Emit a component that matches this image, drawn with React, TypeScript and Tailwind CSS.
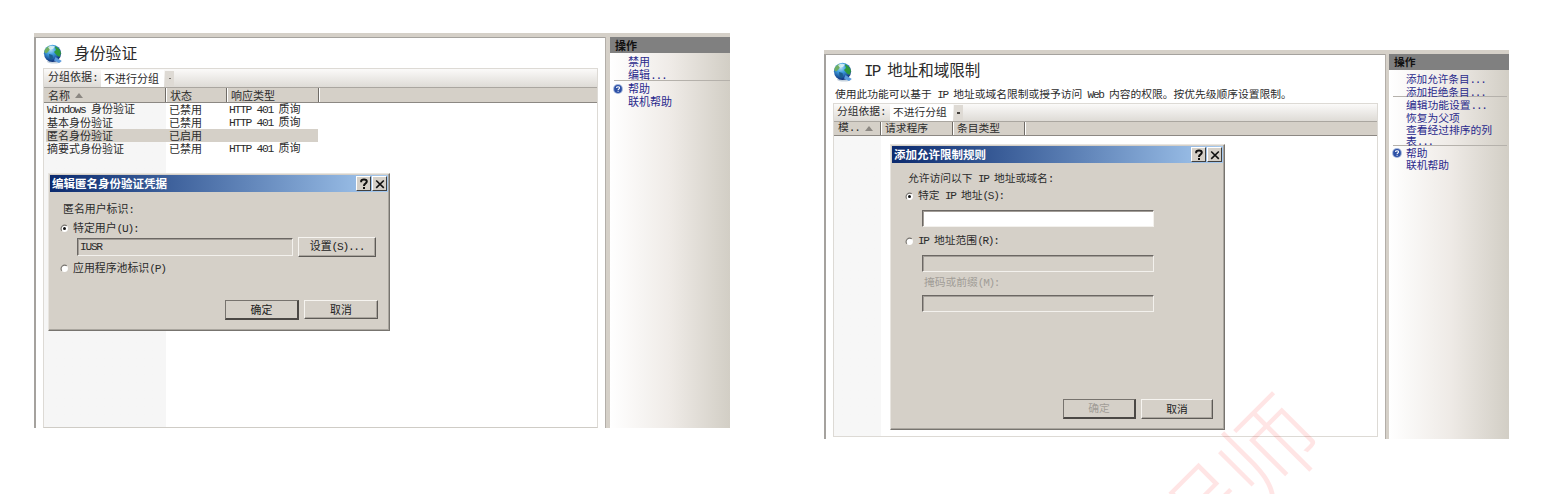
import React from "react";

function T({ children, className = "" }: { children: string; className?: string }) {
  const runs = children.match(/[\x20-\x7e]+|[^\x20-\x7e]+/g) ?? [];
  return (
    <span className={`whitespace-pre ${className}`}>
      {runs.map((r, i) =>
        /^[\x20-\x7e]/.test(r) ? (
          <span key={i} className="font-['Liberation_Mono',monospace] text-[1.03em] tracking-[-0.115em]">{r}</span>
        ) : (
          <span key={i} className="font-['Noto_Sans_CJK_SC',sans-serif]">{r}</span>
        ),
      )}
    </span>
  );
}

function Globe() {
  return (
    <svg viewBox="0 0 20 20" className="h-[20px] w-[20px] shrink-0">
      <defs>
        <radialGradient id="sea" cx="40%" cy="28%" r="72%">
          <stop offset="0" stopColor="#b9e2f5" />
          <stop offset="0.4" stopColor="#3e9fe0" />
          <stop offset="1" stopColor="#0d2f7a" />
        </radialGradient>
      </defs>
      <ellipse cx="11" cy="17.5" rx="7" ry="2" fill="#9fb4c8" opacity=".6" />
      <circle cx="9.5" cy="9.3" r="8.6" fill="url(#sea)" />
      <path d="M1.2 8Q2 4 5.5 2L8 3.5 6.5 6 5 8 3 9.5Z" fill="#6fae62" />
      <path d="M11.5 2Q17 4 18 9L16.5 13 14 11.5 11 8 13 6Z" fill="#2f9a3b" />
      <path d="M6 10L9.5 11 10 13.5 8 16.5 6.5 14Z" fill="#1d5f8d" />
      <path d="M5 3Q9 0.8 12 2.4L10 5 6.5 5.6Z" fill="#e4f5f7" opacity=".8" />
      <path d="M12.5 13L18.8 17 16 19 11 16.5Z" fill="#5b9bdd" />
    </svg>
  );
}

function Help() {
  return (
    <svg viewBox="0 0 10 10" className="h-[10px] w-[10px]">
      <circle cx="5" cy="5" r="4.9" fill="#9fb2da" />
      <circle cx="5" cy="5" r="3.9" fill="#2c50a6" />
      <path d="M3.6 4C3.6 2.3 6.5 2.3 6.5 4 6.5 5 5.1 4.9 5.1 6M5.1 6.8V7.8" fill="none" stroke="#fff" strokeWidth="1.1" />
    </svg>
  );
}

function Caption({ title }: { title: string }) {
  const box = "flex h-[15px] w-[15px] items-center justify-center border border-t-white border-l-white border-r-[#404040] border-b-[#404040] bg-[#d5d0c8]";
  return (
    <div className="flex h-[17px] items-center gap-px bg-linear-to-r from-[#0c2a6e] to-[#a6caf0] pr-px pl-[2px]">
      <T className="flex-1 text-[11.5px] leading-none font-bold text-white">{title}</T>
      <div className={box}>
        <svg viewBox="0 0 12 12" className="h-[12px] w-[12px]">
          <path d="M3.2 4.2V3Q3.2 1.5 6 1.5T8.8 3.6Q8.8 4.8 7.4 5.6 6 6.4 6 8M6 9V11" fill="none" stroke="#111" strokeWidth="2" />
        </svg>
      </div>
      <div className={box}>
        <svg viewBox="0 0 12 12" className="h-[12px] w-[12px]">
          <path d="M2.2 2.5L9.8 9.8M9.8 2.5L2.2 9.8" fill="none" stroke="#111" strokeWidth="1.6" />
        </svg>
      </div>
    </div>
  );
}

function Radio({ on = false }: { on?: boolean }) {
  return (
    <svg viewBox="0 0 9 9" className="h-[9px] w-[9px] shrink-0">
      <circle cx="4.5" cy="4.5" r="3.4" fill="#fff" />
      <path d="M1.8 6.8A3.6 3.6 0 0 1 6.8 1.8" fill="none" stroke="#77736e" strokeWidth="1.1" />
      {on && <circle cx="4.5" cy="4.5" r="1.5" fill="#111" />}
    </svg>
  );
}

function Button({ label, className, strong = false, off = false }: { label: string; className: string; strong?: boolean; off?: boolean }) {
  const edge = strong
    ? "border-r-2 border-b-2 border-t border-l border-t-[#77736e] border-l-[#77736e] border-r-[#4b4845] border-b-[#4b4845]"
    : "border border-t-[#f6f4f0] border-l-[#f6f4f0] border-r-[#5d5a56] border-b-[#5d5a56] shadow-[inset_-1px_-1px_#aaa59e]";
  return (
    <button className={`flex items-center justify-center bg-[#d5d0c8] leading-none ${edge} ${off ? "text-[#a19d97]" : "text-[#222]"} ${className}`}>
      <T>{label}</T>
    </button>
  );
}

function Field({ className, value = "" }: { className: string; value?: string }) {
  return (
    <div className={`flex items-center border border-t-[#6b6763] border-l-[#6b6763] border-r-[#f3f1ed] border-b-[#f3f1ed] shadow-[inset_1px_1px_#a29d97] ${className}`}>
      <T className="leading-none">{value}</T>
    </div>
  );
}

function GroupBar({ className, arrow }: { className: string; arrow: string }) {
  return (
    <div className={`flex items-center bg-linear-to-b from-[#fbfaf9] to-[#dedbd6] leading-none ${className}`}>
      <T className="w-[53px]">分组依据:</T>
      <div className="flex h-[17px] w-[63px] items-center bg-white pl-[3px]"><T>不进行分组</T></div>
      <div className="ml-px flex h-[15px] w-[9px] items-center justify-center bg-[#dedad4]">
        <i className={arrow} />
      </div>
    </div>
  );
}

function Th({ label, className, sorted = false }: { label: string; className: string; sorted?: boolean }) {
  return (
    <div className={`flex items-center gap-[5px] border-r border-r-[#6f6b66] pl-[4px] shadow-[1px_0_#fff] ${className}`}>
      <T>{label}</T>
      {sorted && <svg viewBox="0 0 8 5" className="h-[5px] w-[8px]"><path d="M0 5L4 0L8 5Z" fill="#8b8782" /></svg>}
    </div>
  );
}

function SideHead({ className }: { className: string }) {
  return <div className={`flex items-center bg-[#808080] font-bold text-[#111] ${className}`}><T>操作</T></div>;
}

const rows = [
  ["Windows 身份验证", "已禁用", "HTTP 401 质询"],
  ["基本身份验证", "已禁用", "HTTP 401 质询"],
  ["匿名身份验证", "已启用", ""],
  ["摘要式身份验证", "已禁用", "HTTP 401 质询"],
];

function AuthWindow() {
  return (
    <div className="relative mt-[33px] ml-[34px] flex h-[395px] w-[696px] flex-col bg-[#d5d0c8] pt-[4px] text-[11px] leading-none text-[#2b2b2b]">
      <div className="flex min-h-0 flex-1">
        <div className="flex w-[571px] flex-col border-t border-l-2 border-[#a5a29e] bg-white pl-[7px]">
          <div className="flex h-[30px] items-center pt-[2px]">
            <Globe />
            <T className="ml-[11px] -mt-px text-[15.8px]">身份验证</T>
          </div>
          <div className="mr-[7px] flex flex-1 flex-col border border-[#dddad5] border-b-[#cfccc6]">
            <GroupBar className="h-[18px] pl-[4px]" arrow="h-px w-[2px] bg-[#77736e]" />
            <div className="flex h-[16px] border-t border-b border-t-[#aaa6a0] border-b-[#8c8883] bg-[#d5d0c8]">
              <Th label="名称" className="w-[122px]" sorted />
              <Th label="状态" className="w-[61px]" />
              <Th label="响应类型" className="w-[92px]" />
            </div>
            <div className="flex-1 bg-linear-to-r from-[#f6f6f6] from-[122px] to-white to-[122px]">
              {rows.map((r, i) => (
                <div key={r[0]} className={`ml-[2px] flex h-[13px] w-[272px] items-center ${i === 2 ? "bg-[#d5d0c8]" : ""}`}>
                  <T className="w-[123px] pl-px">{r[0]}</T>
                  <T className="w-[60px]">{r[1]}</T>
                  <T>{r[2]}</T>
                </div>
              ))}
            </div>
          </div>
        </div>
        <div className="w-[5px] border-l border-[#b3aea8] bg-[#d5d0c8]" />
        <div className="flex-1 bg-linear-to-r from-white via-[#efebe7] to-[#d2cec5] text-[#29298c]">
          <SideHead className="h-[16px] pl-[5px]" />
          <div className="ml-[4px] flex h-[28px] flex-col border-b border-[#b5b1ab] pt-[2px] pl-[14px] leading-[12px]">
            <T>禁用</T><T>编辑...</T>
          </div>
          <div className="flex pt-px pl-[3px] leading-[13px]">
            <div className="mt-[2px] w-[15px]"><Help /></div>
            <div className="flex flex-col"><T>帮助</T><T>联机帮助</T></div>
          </div>
        </div>
      </div>
      <div className="absolute top-[140px] left-[14px] flex h-[158px] w-[342px] flex-col border border-t-[#e8e5e0] border-l-[#e8e5e0] border-r-[#77746f] border-b-[#77746f] bg-[#d5d0c8] p-px text-[10.9px] shadow-[inset_-1px_-1px_#aaa69f]">
        <Caption title="编辑匿名身份验证凭据" />
        <div className="flex flex-col">
          <T className="mt-[11px] ml-[13px] leading-[11px]">匿名用户标识:</T>
          <div className="mt-[7px] ml-[10px] flex h-[11px] items-center gap-[4px]"><Radio on /><T>特定用户(U):</T></div>
          <div className="mt-[3px] ml-[27px] flex items-center gap-[5px]">
            <Field className="h-[18px] w-[216px] pl-[2px]" value="IUSR" />
            <Button label="设置(S)..." className="h-[20px] w-[78px]" />
          </div>
          <div className="mt-[6px] ml-[10px] flex h-[11px] items-center gap-[4px]"><Radio /><T>应用程序池标识(P)</T></div>
          <div className="mt-[26px] ml-[175px] flex gap-[5px]">
            <Button label="确定" className="h-[20px] w-[74px]" strong />
            <Button label="取消" className="h-[19px] w-[74px]" />
          </div>
        </div>
      </div>
    </div>
  );
}

function IpWindow() {
  return (
    <div className="relative mt-[50px] ml-[94px] flex h-[389px] w-[685px] flex-col bg-[#d5d0c8] pt-[4px] text-[10.75px] leading-none text-[#2b2b2b]">
      <div className="flex min-h-0 flex-1">
        <div className="flex w-[561px] flex-col border-t border-l-2 border-[#a5a29e] bg-white pl-[7px]">
          <div className="flex h-[31px] items-center pt-[2px]">
            <Globe />
            <T className="ml-[11px] -mt-px text-[15.5px]">IP 地址和域限制</T>
          </div>
          <T className="h-[17px] pt-[2px] pl-[2px] leading-[12px]">使用此功能可以基于 IP 地址或域名限制或授予访问 Web 内容的权限。按优先级顺序设置限制。</T>
          <div className="mr-[7px] mb-[2px] flex flex-1 flex-col border border-[#dddad5]">
            <GroupBar className="h-[17px] pl-[3px]" arrow="h-[2px] w-[3px] bg-[#44413e]" />
            <div className="flex h-[15px] border-t border-b border-t-[#aaa6a0] border-b-[#8c8883] bg-[#d5d0c8]">
              <Th label="模.." className="w-[47px]" sorted />
              <Th label="请求程序" className="w-[72px]" />
              <Th label="条目类型" className="w-[72px]" />
            </div>
            <div className="flex-1 bg-linear-to-r from-[#f7f7f7] from-[47px] to-white to-[47px]" />
          </div>
        </div>
        <div className="w-[4px] border-l border-[#b3aea8] bg-[#d5d0c8]" />
        <div className="flex-1 bg-linear-to-r from-white via-[#efebe7] to-[#d2cec5] text-[#29298c]">
          <SideHead className="h-[16px] pl-[5px]" />
          <div className="mr-[2px] ml-[4px] flex h-[27px] flex-col border-b border-[#b5b1ab] pt-[3px] pl-[13px] text-[10.6px] leading-[12px]">
            <T>添加允许条目...</T><T className="leading-[11px]">添加拒绝条目...</T>
          </div>
          <div className="mr-[2px] ml-[4px] flex h-[49px] flex-col border-b border-[#b5b1ab] pt-[2px] pl-[13px] leading-[12px]">
            <T>编辑功能设置...</T><T>恢复为父项</T><T>查看经过排序的列</T><T className="leading-[9px]">表...</T>
          </div>
          <div className="flex pt-px pl-[3px] leading-[12px]">
            <div className="mt-[1px] w-[14px]"><Help /></div>
            <div className="flex flex-col"><T>帮助</T><T>联机帮助</T></div>
          </div>
        </div>
      </div>
      <div className="absolute top-[94px] left-[66px] flex h-[286px] w-[335px] flex-col border border-t-[#e8e5e0] border-l-[#e8e5e0] border-r-[#77746f] border-b-[#77746f] bg-[#d5d0c8] p-px shadow-[inset_-1px_-1px_#aaa69f]">
        <Caption title="添加允许限制规则" />
        <div className="flex flex-col">
          <T className="mt-[9px] ml-[16px] leading-[11px]">允许访问以下 IP 地址或域名:</T>
          <div className="mt-[6px] ml-[13px] flex h-[11px] items-center gap-[4px]"><Radio on /><T>特定 IP 地址(S):</T></div>
          <Field className="mt-[8px] ml-[30px] h-[17px] w-[232px] bg-white" />
          <div className="mt-[9px] ml-[13px] flex h-[11px] items-center gap-[4px]"><Radio /><T>IP 地址范围(R):</T></div>
          <Field className="mt-[8px] ml-[30px] h-[17px] w-[232px]" />
          <T className="mt-[4px] ml-[32px] leading-[11px] text-[#a19d97]">掩码或前缀(M):</T>
          <Field className="mt-[6px] ml-[30px] h-[17px] w-[232px]" />
          <div className="mt-[87px] ml-[171px] flex gap-[5px]">
            <Button label="确定" className="h-[20px] w-[73px]" strong off />
            <Button label="取消" className="h-[20px] w-[72px]" />
          </div>
        </div>
      </div>
    </div>
  );
}

export default function App() {
  return (
    <main className="relative flex h-[494px] w-[1551px] items-start overflow-hidden bg-white">
      <AuthWindow />
      <IpWindow />
      <div className="pointer-events-none absolute top-[431px] left-[1132px] origin-center -rotate-45 font-['Noto_Sans_CJK_SC',sans-serif] text-[98px] leading-none font-light whitespace-nowrap text-[#ff0000]/10">
        程师
      </div>
    </main>
  );
}
